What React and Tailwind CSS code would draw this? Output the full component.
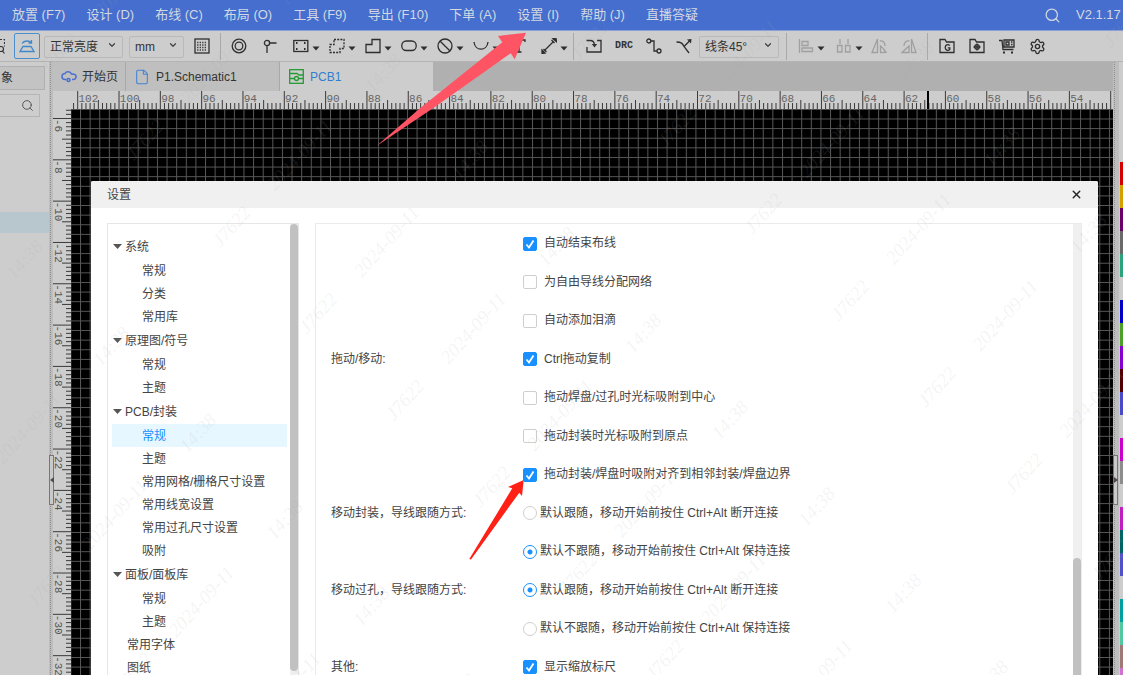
import React, { useState } from 'react';
import { ChevronDown, Search, Settings, X, File } from 'lucide-react';

const MENUS = [
  '放置 (F7)', '设计 (D)', '布线 (C)', '布局 (O)', '工具 (F9)',
  '导出 (F10)', '下单 (A)', '设置 (I)', '帮助 (J)', '直播答疑'
];

const TREE = [
  { label: '系统', children: ['常规', '分类', '常用库'] },
  { label: '原理图/符号', children: ['常规', '主题'] },
  {
    label: 'PCB/封装',
    children: ['常规', '主题', '常用网格/栅格尺寸设置', '常用线宽设置', '常用过孔尺寸设置', '吸附']
  },
  { label: '面板/面板库', children: ['常规', '主题'] }
];

const OPTIONS = [
  { type: 'checkbox', text: '自动结束布线', checked: true },
  { type: 'checkbox', text: '为自由导线分配网络' },
  { type: 'checkbox', text: '自动添加泪滴' },
  { group: '拖动/移动:', type: 'checkbox', text: 'Ctrl拖动复制', checked: true },
  { type: 'checkbox', text: '拖动焊盘/过孔时光标吸附到中心' },
  { type: 'checkbox', text: '拖动封装时光标吸附到原点' },
  { type: 'checkbox', text: '拖动封装/焊盘时吸附对齐到相邻封装/焊盘边界', checked: true },
  { group: '移动封装，导线跟随方式:', type: 'radio', name: 'footprint', text: '默认跟随，移动开始前按住 Ctrl+Alt 断开连接' },
  { type: 'radio', name: 'footprint', text: '默认不跟随，移动开始前按住 Ctrl+Alt 保持连接', checked: true },
  { group: '移动过孔，导线跟随方式:', type: 'radio', name: 'via', text: '默认跟随，移动开始前按住 Ctrl+Alt 断开连接', checked: true },
  { type: 'radio', name: 'via', text: '默认不跟随，移动开始前按住 Ctrl+Alt 保持连接' },
  { group: '其他:', type: 'checkbox', text: '显示缩放标尺', checked: true }
];

const LAYER_COLORS = [
  'bg-[#d40000]', 'bg-[#d4a000]', 'bg-[#6a006a]', 'bg-[#696969]', 'bg-[#2ba37d]', 'bg-[#cdcdcd]',
  'bg-[#0000c8]', 'bg-[#4c9f2a]', 'bg-[#8800d0]', 'bg-[#500000]', 'bg-[#4a4ac8]', 'bg-[#cdcdcd]',
  'bg-[#cc00cc]', 'bg-[#8c8c8c]', 'bg-[#cdcdcd]', 'bg-[#c01ec0]', 'bg-[#006464]', 'bg-[#5050c8]',
  'bg-[#cdcdcd]', 'bg-[#00a0a0]', 'bg-[#50c8a0]', 'bg-[#a07878]', 'bg-[#d070d0]'
];

// Ruler geometry: distance between two labelled ticks
const STEP = 41.32;

const Icon = ({ children, muted, stroke = 1.3 }) => (
  <svg
    viewBox="0 0 16 16"
    className={`w-4 h-4 shrink-0 ${muted ? 'text-[#a0a0a0]' : 'text-[#2e2e2e]'}`}
    fill="none"
    stroke="currentColor"
    strokeWidth={stroke}
  >
    {children}
  </svg>
);

const Tool = ({ label, children }) => (
  <button aria-label={label} className="w-4 h-4 shrink-0">{children}</button>
);

const DropTool = ({ label, children }) => (
  <button aria-label={label} className="flex items-center gap-[3px] w-[27px] shrink-0">
    {children}
    <svg viewBox="0 0 8 5" className="w-2 h-[5px] mt-1 shrink-0 text-[#2e2e2e]" fill="currentColor">
      <path d="M0.5 0.5h7L4 4.5z" />
    </svg>
  </button>
);

const ToolSelect = ({ label, value, className }) => (
  <div className={`relative shrink-0 ${className}`}>
    <select
      aria-label={label}
      className="w-full h-[22px] pl-[5px] pr-5 appearance-none rounded-xs border border-[#b9b9b9] bg-transparent text-[12px] leading-[18px] text-[#333]"
    >
      <option>{value}</option>
    </select>
    <ChevronDown className="absolute right-[6px] top-[6px] w-[10px] h-[10px] text-[#444] pointer-events-none" strokeWidth={3} />
  </div>
);

const Divider = () => <div className="w-px h-[27px] shrink-0 bg-[#a9a9a9]" />;

const MenuBar = () => (
  <nav className="flex items-center h-[31px] shrink-0 pl-3 bg-[#456ece] border-b border-[#8a9fd6] text-[13px] text-[#d3d8e2] whitespace-nowrap overflow-hidden">
    <div className="flex gap-[21px]">
      {MENUS.map((menu) => <button key={menu}>{menu}</button>)}
    </div>
    <Search className="w-[17px] h-[17px] ml-auto mr-[15px] shrink-0" strokeWidth={1.8} />
    <span className="w-[47px] shrink-0">V2.1.17</span>
  </nav>
);

const Toolbar = () => (
  <div className="flex items-center h-[31px] shrink-0 bg-[#cdcdcd] border-b border-[#b4b4b4] overflow-hidden">
    <svg viewBox="0 0 5 16" className="w-[5px] h-4 shrink-0" fill="none" stroke="#333" strokeWidth="1.2">
      <path d="M0 1.5h4.5v7" strokeDasharray="2 1.5" />
      <circle cx="1" cy="11" r="2.5" />
      <path d="M2.5 13l2 2.5" />
    </svg>
    <button aria-label="翻转视图" className="flex items-center justify-center w-[26px] h-[26px] ml-[9px] shrink-0 rounded-xs border border-[#4a90cf] text-[#3f88cc]">
      <svg viewBox="0 0 16 16" className="w-4 h-4" fill="none" stroke="currentColor" strokeWidth="1.3">
        <path d="M4 8.5h8l3 5H1zM3 5.5c2-3 7-3.5 9.5-.5M12.5 2v3.2h-3" />
      </svg>
    </button>
    <ToolSelect label="亮度" value="正常亮度" className="w-[79px] ml-1" />
    <ToolSelect label="单位" value="mm" className="w-[55px] ml-[6px] mr-[10px]" />
    <Tool label="网格">
      <Icon>
        <rect x="1" y="1" width="14" height="14" />
        <path d="M3.2 4.5h10M3.2 7h10M3.2 9.5h10M3.2 12h10" strokeDasharray="1.2 1.3" />
      </Icon>
    </Tool>
    <div className="mx-[10px]"><Divider /></div>
    <div className="flex items-center gap-[15px] shrink-0">
      <Tool label="焊盘"><Icon><circle cx="8" cy="8" r="6.8" /><circle cx="8" cy="8" r="3.8" /></Icon></Tool>
      <Tool label="过孔"><Icon><circle cx="5" cy="5" r="2.6" /><path d="M7.6 5H14.5M5 7.6V15" /></Icon></Tool>
      <DropTool label="板框">
        <Icon>
          <rect x=".8" y="2.5" width="14" height="11" />
          <path d="M3 5h1.5M11 5h1.500M3 11h1.5M11 11h1.5" strokeWidth="1.8" />
        </Icon>
      </DropTool>
    </div>
    <div className="flex items-center gap-[9px] ml-[9px] shrink-0">
      <DropTool label="禁止区域">
        <Icon><path d="M5 1.5h10v9h-4v4H1v-8h4z" strokeDasharray="2 1.2" /></Icon>
      </DropTool>
      <DropTool label="铺铜"><Icon><path d="M1 6.5h6v-5h8v13H1z" /></Icon></DropTool>
      <DropTool label="槽孔"><Icon><rect x=".8" y="3" width="14.4" height="9.5" rx="4.5" /></Icon></DropTool>
      <DropTool label="禁止"><Icon><circle cx="8" cy="8" r="7" /><path d="M3.2 3.2l9.6 9.6" /></Icon></DropTool>
      <DropTool label="圆弧"><Icon><path d="M1 4c1 9.5 13 9.5 14 0" /></Icon></DropTool>
    </div>
    <div className="flex items-center gap-[14px] ml-[11px] shrink-0">
      <Tool label="文本"><Icon><path d="M2 4V2h12v2M8 2v12M5.500 14h5" /></Icon></Tool>
      <DropTool label="尺寸">
        <Icon><path d="M3.500 12.5L12.500 3.500" /><path d="M1 12l3 3-3 .5zM12 .8l3.5 3-.5-3.400zM2.500 11l3 3M10.500 2l3 3" fill="currentColor" /></Icon>
      </DropTool>
    </div>
    <div className="ml-[5px] mr-3"><Divider /></div>
    <div className="flex items-center gap-[14px] shrink-0">
      <Tool label="导入">
        <Icon>
          <path d="M1 9v5h14V2.500h-4M0.500 2.500H4c3 0 4.500 2 4.500 5" />
          <path d="M5.800 6h5.400l-2.700 3.500z" fill="currentColor" stroke="none" />
        </Icon>
      </Tool>
      <button className="flex justify-center w-4 shrink-0 text-[10px] leading-4 font-bold text-[#333] font-['Liberation_Mono',monospace]">DRC</button>
      <Tool label="布线"><Icon><circle cx="2.800" cy="3" r="2" /><circle cx="13" cy="13" r="2" /><path d="M4.800 3H8v10h3" /></Icon></Tool>
      <Tool label="拐角">
        <Icon>
          <path d="M.500 4c5 0 6 1.500 7.500 4.500l5 6.500M8 8.500l5.500-5.500" />
          <path d="M11 1.500L15.500 1 15 5.500z" fill="currentColor" stroke="none" />
        </Icon>
      </Tool>
    </div>
    <ToolSelect label="拐角" value="线条45°" className="w-20 ml-[7px] mr-[7px]" />
    <Divider />
    <div className="flex items-center gap-[11px] ml-[11px] shrink-0">
      <DropTool label="对齐"><Icon muted><path d="M1.500 1v14M4 3.500h6v4H4zM4 10h10.500v3.500H4z" /></Icon></DropTool>
      <DropTool label="分布"><Icon muted><path d="M4 1v5M12 1v5M1.500 7.500H6v6.500H1.500zM9.500 7.500H14v6.500H9.500z" /></Icon></DropTool>
    </div>
    <div className="flex items-center gap-[14px] ml-2 mr-[10px] shrink-0">
      <Tool label="水平翻转"><Icon muted><path d="M6.500 1v13.500H1zM9 14.500l6-.1c-1-2-3.500-5-5.500-6.500v6.500M9 3c3-.5 5 1.500 5 5" /></Icon></Tool>
      <Tool label="垂直翻转"><Icon muted><path d="M10.500 1v13.500H15zM8 14.500H1l7-6.500zM3 8c0-3.500 2-5.500 5.500-5" /></Icon></Tool>
    </div>
    <Divider />
    <div className="flex items-center gap-[14px] ml-[11px] shrink-0">
      <Tool label="Gerber">
        <Icon>
          <path d="M1 14.500v-13h5l1.500 2.500h7.500v10.500zM10.800 7.500c-2-1.800-4.600-.5-4.600 2s2.600 3.800 4.600 2V9.800H8.800" />
        </Icon>
      </Tool>
      <Tool label="制造文件">
        <Icon>
          <path d="M1 14.500v-13h5l1.500 2.500h7.500v10.500zM8 5.500v7M4.500 9h7" />
          <circle cx="8" cy="9" r="2.300" />
        </Icon>
      </Tool>
      <Tool label="下单">
        <Icon>
          <path d="M0 2.500h3l1 9h10.500M5 2h10v7H5zM7 4h3v3H7zM12 4h1.500M12 6.500h1.500" />
          <path d="M5 13.500v2M13 13.500v2" strokeWidth="2" />
        </Icon>
      </Tool>
      <Tool label="设置"><Settings className="w-[17px] h-[17px] text-[#2e2e2e]" strokeWidth={1.9} /></Tool>
    </div>
  </div>
);

// Splitter with the small collapse handle in its middle
const Splitter = ({ right }) => (
  <div className={`relative shrink-0 bg-[#bdbdbd] ${right ? 'w-[6px]' : 'w-1'}`}>
    <div className="h-full w-[2px] border-r border-dotted border-[#8f8f8f]" />
    <button
      aria-label="折叠面板"
      className="absolute top-[393px] left-0 flex items-center justify-center w-[5px] h-[50px] border border-[#807373] bg-[#c9c9c9]"
    >
      <svg viewBox="0 0 4 6" className="w-1 h-[6px] shrink-0" fill="#554a4a">
        <path d={right ? 'M0 0l4 3-4 3z' : 'M4 0L0 3l4 3z'} />
      </svg>
    </button>
  </div>
);

const LeftPanel = () => (
  <aside className="w-[49px] shrink-0 bg-[#cdcdcd] text-[12px] text-[#333]">
    <div className="mt-[4px] w-[45px] h-6 pl-px leading-[23px] border border-l-0 border-[#b0b0b0] bg-[#c3c3c3]">象</div>
    <div className="flex items-center justify-end w-10 h-[23px] mt-1 pr-[5px] border border-l-0 border-[#b5b5b5]">
      <Search className="w-[13px] h-[13px] text-[#555]" strokeWidth={1.8} />
    </div>
    <div className="h-[21px] mt-[95px] bg-[#b7c7cd]" />
  </aside>
);

const Tabs = () => (
  <div className="flex h-[29px] shrink-0 bg-[#b0b0b0] text-[12px] text-[#333]" role="tablist">
    <button role="tab" className="flex items-center gap-[5px] w-[73px] pl-2 bg-[#bfbfbf] border-r border-[#a8a8a8] whitespace-nowrap">
      <svg viewBox="0 0 16 12" className="w-4 h-3 shrink-0" fill="none" stroke="#4a6fd0" strokeWidth="1.500">
        <path d="M5.500 8.500H4a3 3 0 0 1 0-6c1-2.400 5.500-2.400 6.500.5 3-.2 5 1 4.500 3.300-.3 1.500-1.500 2.200-3 2.200h-1" />
        <circle cx="7.500" cy="9" r="1.500" />
      </svg>
      开始页
    </button>
    <button role="tab" className="flex items-center gap-[6px] w-[154px] pl-2 bg-[#bfbfbf] border-r border-[#a8a8a8]">
      <File className="w-4 h-4 text-[#4284d4]" strokeWidth={1.6} />
      P1.Schematic1
    </button>
    <button role="tab" aria-selected="true" className="flex items-center gap-[6px] w-[153px] pl-[9px] bg-[#cdcdcd] text-[#3080d0]">
      <svg viewBox="0 0 15 15" className="w-[15px] h-[15px]" fill="none" stroke="#259a35" strokeWidth="1.300">
        <rect x=".7" y=".7" width="13.600" height="13.600" />
        <path d="M1 4.500h7l2 1.500h4.500M1 9.500h4.500M9.500 9.500h4.500" />
        <circle cx="7.500" cy="9.500" r="2" />
      </svg>
      PCB1
    </button>
  </div>
);

const HorizontalRuler = () => {
  const ticks = [];
  for (let i = -1; i < 252; i++) {
    const x = 24.7 + (i * STEP) / 10;
    const top = i % 10 === 0 ? 0 : i % 5 === 0 ? 9 : 12;
    ticks.push(<path key={i} d={`M${x} ${top}V18`} />);
  }
  return (
    <svg className="block w-full h-[18px] shrink-0 bg-[#cdcdcd]">
      <g stroke="#3a3a3a">{ticks}</g>
      <g fill="#666" fontSize="11" fontFamily="Liberation Mono, monospace">
        {Array.from({ length: 25 }, (_, i) => (
          <text key={i} x={25.5 + i * STEP} y="11">{102 - i * 2}</text>
        ))}
      </g>
      <path d="M875 0v18" stroke="#000" strokeWidth="2" />
    </svg>
  );
};

const VerticalRuler = () => {
  const ticks = [];
  for (let i = -2; i < 150; i++) {
    const y = 9.5 + (i * STEP) / 10;
    const left = i % 10 === 0 ? 0 : i % 5 === 0 ? 9 : 13;
    ticks.push(<path key={i} d={`M${left} ${y}H18`} />);
  }
  return (
    <svg className="block w-[18px] h-full shrink-0 bg-[#cdcdcd]">
      <g stroke="#3a3a3a">{ticks}</g>
      <g fill="#555" fontSize="11" fontFamily="Liberation Mono, monospace">
        {Array.from({ length: 14 }, (_, i) => (
          <text key={i} transform={`translate(2 ${10 + i * STEP}) rotate(90)`}>{-6 - i * 2}</text>
        ))}
      </g>
    </svg>
  );
};

const BoardCanvas = () => (
  <svg className="flex-1 min-w-0 h-full bg-black">
    <defs>
      <pattern id="grid" x="9" y="9.5" width="9.616" height="9.616" patternUnits="userSpaceOnUse">
        <path d="M.5 0V9.616M0 .5H9.616" stroke="#585858" />
      </pattern>
    </defs>
    <rect width="100%" height="100%" fill="url(#grid)" />
  </svg>
);

const OptionRow = ({ group, type, name, text, checked }) => (
  <div className="flex items-center h-[38px] even:h-[39px] pl-[15px]">
    <span className="w-48 shrink-0">{group}</span>
    <label className={`flex items-center whitespace-nowrap ${type === 'radio' ? 'gap-[3px]' : 'gap-[7px]'}`}>
      {type === 'radio' ? (
        <input
          type="radio"
          name={name}
          defaultChecked={checked}
          className="appearance-none w-[14px] h-[14px] mt-px rounded-full border border-[#cfcfcf] bg-white checked:border-[#1890ff] checked:bg-[radial-gradient(#1890ff_2px,#fff_3px)]"
        />
      ) : (
        <span className="relative block w-[14px] h-[14px] mt-px">
          <input
            type="checkbox"
            defaultChecked={checked}
            className="peer block appearance-none w-[14px] h-[14px] rounded-xs border border-[#cfcfcf] bg-white checked:border-[#1890ff] checked:bg-[#1890ff]"
          />
          <svg
            viewBox="0 0 14 14"
            className="absolute inset-0 hidden peer-checked:block pointer-events-none"
            fill="none"
            stroke="#fff"
            strokeWidth="1.8"
          >
            <path d="M3.5 7.5l2.500 3L10.500 3.500" />
          </svg>
        </span>
      )}
      {text}
    </label>
  </div>
);

const SettingsTree = () => {
  const [selected, setSelected] = useState('PCB/封装-常规');

  return (
    <div className="flex w-48 shrink-0 border border-b-0 border-[#e6e6e6]">
      <div className="flex-1 pl-1 pr-[3px] pt-[10px]">
        {TREE.map(({ label, children }) => (
          <div key={label}>
            <button className="flex items-center gap-[3px] w-full h-[25px] pl-[1px]">
              <svg viewBox="0 0 9 5" className="w-[9px] h-[5px]" fill="#555"><path d="M0 0h9L4.500 5z" /></svg>
              {label}
            </button>
            {children.map((child) => {
              const id = `${label}-${child}`;
              return (
                <button
                  key={child}
                  onClick={() => setSelected(id)}
                  className={`block w-full h-[23px] pl-[30px] text-left whitespace-nowrap ${selected === id ? 'bg-[#e6f7ff] text-[#1890ff]' : ''}`}
                >
                  {child}
                </button>
              );
            })}
          </div>
        ))}
        <button className="block w-full h-[23px] pl-[15px] text-left">常用字体</button>
        <button className="block w-full h-[23px] pl-[15px] text-left">图纸</button>
      </div>
      <div className="w-2 pb-1 bg-[#f0f0f0]">
        <div className="h-full rounded-full bg-[#c1c1c1]" />
      </div>
    </div>
  );
};

const SettingsDialog = () => (
  <section
    role="dialog"
    aria-label="设置"
    className="absolute left-[91px] right-[25px] top-[181px] bottom-0 flex flex-col overflow-hidden rounded-t-xs bg-white text-[12px] leading-[18px] text-[#444]"
  >
    <header className="flex items-center justify-between h-[27px] shrink-0 pl-4 pr-[15px] bg-[#f0f0f0]">
      <h2>设置</h2>
      <button aria-label="关闭"><X className="w-[13px] h-[13px] text-[#222]" strokeWidth={2.5} /></button>
    </header>
    <div className="flex flex-1 min-h-0 gap-4 pt-[15px] px-4">
      <SettingsTree />
      <div className="flex flex-1 min-w-0 border border-b-0 border-[#ebebeb]">
        <div className="flex-1">
          {OPTIONS.map((option, i) => <OptionRow key={i} {...option} />)}
        </div>
        <div className="flex flex-col justify-end w-2 h-full bg-[#f0f0f0]">
          <div className="h-[26%] rounded-t-full bg-[#c1c1c1]" />
        </div>
      </div>
    </div>
  </section>
);

// Diagonal columns of user id, date and time
const Watermark = () => {
  const marks = [
    { text: 'J7622', x: 145, y: 140 },
    { text: '2024-09-11', x: 300, y: 155 },
    { text: '14:38', x: 470, y: 160 }
  ];
  const cells = [];
  marks.forEach(({ text, x, y }) => {
    for (let col = -1; col < 3; col++) {
      for (let row = -9; row < 14; row++) {
        const cx = x + col * 532 + row * 86.7;
        const cy = y - col * 13 + row * 86.7;
        if (cx > -20 && cx < 1143 && cy > -20 && cy < 695) {
          cells.push(
            <text key={`${text}${col}${row}`} transform={`translate(${cx} ${cy}) rotate(-48)`} y="6" textAnchor="middle">
              {text}
            </text>
          );
        }
      }
    }
  });
  return (
    <svg aria-hidden="true" className="absolute inset-0 w-full h-full pointer-events-none">
      <g fill="#a8a8a8" fillOpacity="0.13" fontSize="19" fontStyle="italic" fontFamily="Liberation Serif, serif">
        {cells}
      </g>
    </svg>
  );
};

const Arrows = () => (
  <svg aria-hidden="true" className="absolute inset-0 w-full h-full pointer-events-none">
    <path d="M376.5 146L420 108.3 502.3 42.3 498 36 526 32.7 514.7 59.3 510.7 53.3 433 108.3z" fill="#ff5464" />
    <path d="M469.3 559L512.3 488.3 508 487 523.7 480 522 496 519.3 492.7 471 559.5z" fill="#ff2016" />
  </svg>
);

function App() {
  return (
    <div className="relative flex flex-col h-screen overflow-hidden bg-[#cdcdcd] font-['Liberation_Sans','Noto_Sans_CJK_SC',sans-serif]">
      <MenuBar />
      <Toolbar />
      <div className="flex flex-1 min-h-0">
        <LeftPanel />
        <Splitter />
        <main className="flex flex-col flex-1 min-w-0">
          <Tabs />
          <HorizontalRuler />
          <div className="flex flex-1 min-h-0">
            <VerticalRuler />
            <BoardCanvas />
          </div>
        </main>
        <Splitter right />
        <aside className="w-1 shrink-0 pt-[100px] pl-px overflow-hidden">
          {LAYER_COLORS.map((color, i) => <div key={i} className={`h-[23px] ${color}`} />)}
        </aside>
      </div>
      <SettingsDialog />
      <Watermark />
      <Arrows />
    </div>
  );
}

export default App;
